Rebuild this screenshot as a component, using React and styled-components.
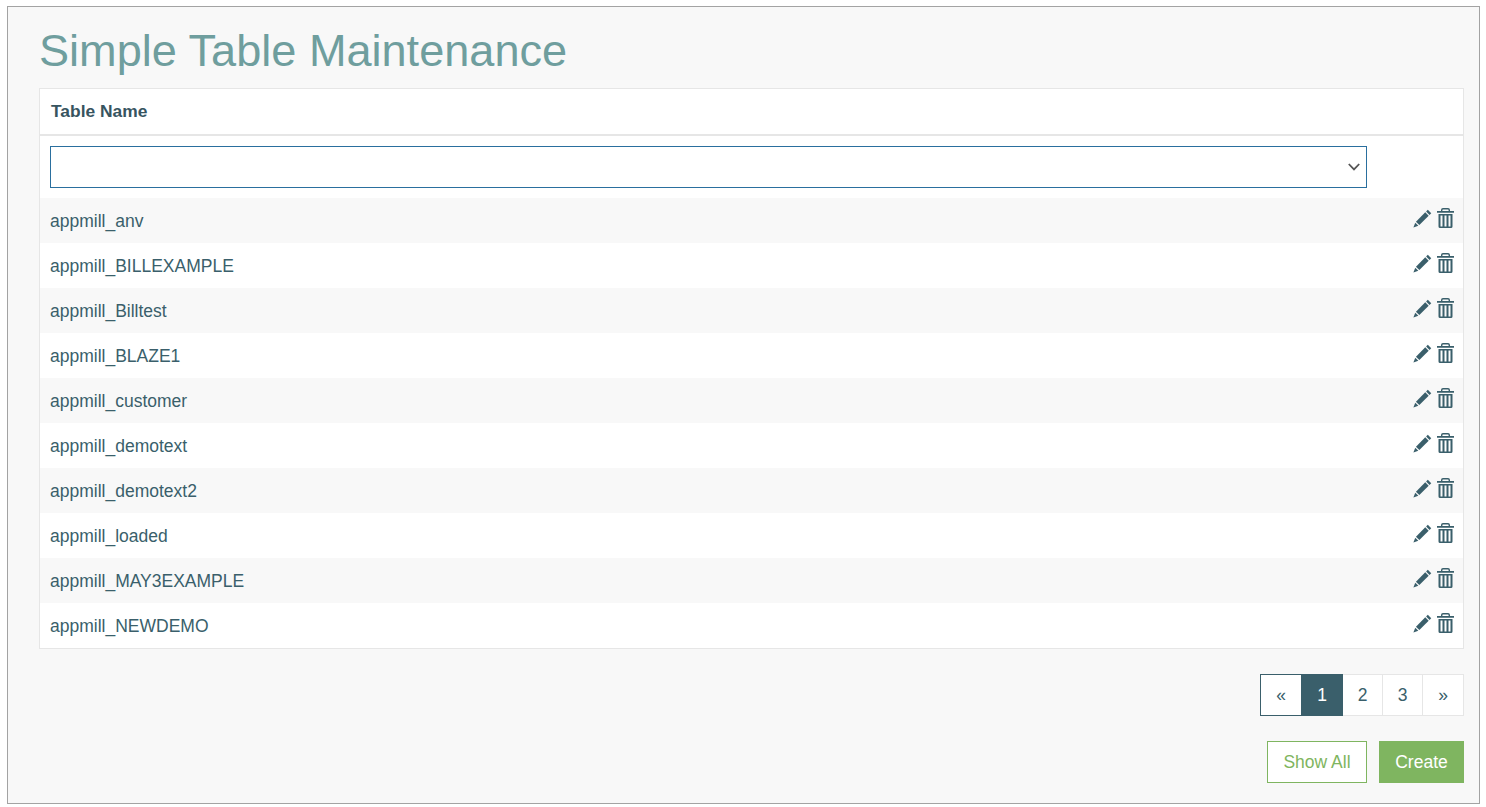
import React from "react";
import styled, { createGlobalStyle } from "styled-components";

const tables = [
  "appmill_anv",
  "appmill_BILLEXAMPLE",
  "appmill_Billtest",
  "appmill_BLAZE1",
  "appmill_customer",
  "appmill_demotext",
  "appmill_demotext2",
  "appmill_loaded",
  "appmill_MAY3EXAMPLE",
  "appmill_NEWDEMO",
];

const GlobalStyle = createGlobalStyle`
  * { box-sizing: border-box; }
  html, body { margin: 0; background: #fff; }
  body { font-family: "Liberation Sans", Arial, sans-serif; color: #3a5f6b; }
`;

const Page = styled.div`
  height: 798px;
  margin: 6px 6px 0 7px;
  padding: 0 15px 20px 31px;
  background: #f8f8f8;
  border: 1px solid #a3a3a3;
`;

const Title = styled.h1`
  margin: 0;
  height: 81px;
  padding-top: 16px;
  font-size: 45.1px;
  line-height: 56px;
  font-weight: 400;
  color: #6f9e9e;
`;

const Table = styled.div`
  background: #fff;
  border: 1px solid #e6e6e6;
`;

const HeaderRow = styled.div`
  height: 47px;
  padding-left: 11px;
  display: flex;
  align-items: center;
  border-bottom: 2px solid #e6e6e6;
  font-size: 17.4px;
  font-weight: 700;
  color: #37545f;
`;

const FilterRow = styled.div`
  height: 62px;
  padding: 10px 96px 10px 10px;
`;

const Select = styled.div`
  height: 42px;
  padding-right: 5px;
  display: flex;
  align-items: center;
  justify-content: flex-end;
  background: #fff;
  border: 1px solid #2a6f9e;
  color: #555;
`;

const Row = styled.div`
  height: 45px;
  padding: 2px 9px 0 10px;
  display: flex;
  align-items: center;
  justify-content: space-between;
  background: ${({ $striped }) => ($striped ? "#f8f8f8" : "#fff")};
  font-size: 17.5px;
`;

const Actions = styled.div`
  display: flex;
  align-items: flex-end;
  gap: 5px;
  color: #3a5f6b;
  margin-bottom: 8px;
`;

const Pager = styled.div`
  margin-top: 25px;
  display: flex;
  justify-content: flex-end;
`;

const PageLink = styled.div`
  width: ${({ $wide }) => ($wide ? "42px" : "41px")};
  height: 42px;
  margin-left: -1px;
  display: flex;
  align-items: center;
  justify-content: center;
  z-index: ${({ $active }) => ($active ? 1 : 0)};
  font-size: 17.5px;
  color: ${({ $active }) => ($active ? "#fff" : "#3a5f6b")};
  background: ${({ $active }) => ($active ? "#3a5f6b" : "#fff")};
  border: 1px solid ${({ $active, $outlined }) => ($active || $outlined ? "#3a5f6b" : "#e6e6e6")};
`;

const Buttons = styled.div`
  margin-top: 25px;
  display: flex;
  justify-content: flex-end;
  gap: 12px;
`;

const Button = styled.div`
  height: 42px;
  width: ${({ $width }) => $width}px;
  display: flex;
  align-items: center;
  justify-content: center;
  font-size: 17.5px;
  color: ${({ $primary }) => ($primary ? "#fff" : "#7fb560")};
  background: ${({ $primary }) => ($primary ? "#7fb560" : "#fff")};
  border: 1px solid #7fb560;
`;

const Chevron = () => (
  <svg width="14" height="14" viewBox="0 0 14 14" fill="none" stroke="currentColor" strokeWidth="1.8">
    <path d="M1.8 4 7 9.4 12.2 4" />
  </svg>
);

const Pencil = () => (
  <svg width="19" height="19" viewBox="0 0 20 20" fill="currentColor">
    <path d="M15.6 .8 19.2 4.4 17.4 6.2 13.8 2.6Z" />
    <path d="M12.9 3.5 16.5 7.1 6.7 16.9 3.1 13.3Z" />
    <path d="M2.4 14.4 5.6 17.6 .4 19.6Z" />
  </svg>
);

const Trash = () => (
  <svg width="17" height="20" viewBox="0 0 17 20" fill="currentColor" fillRule="evenodd">
    <path d="M6 0h5a2 2 0 0 1 2 2v1h4v1.8H0V3h4V2a2 2 0 0 1 2-2Zm0 1.5a.6.6 0 0 0-.6.6V3h6.2v-.9a.6.6 0 0 0-.6-.6Z" />
    <path d="M1.5 6h14v12.5a1.5 1.5 0 0 1-1.5 1.5H3a1.5 1.5 0 0 1-1.5-1.5ZM3.5 7.5h2v11h-2ZM7.5 7.5h2v11h-2ZM11.5 7.5h2v11h-2Z" />
  </svg>
);

export default function App() {
  return (
    <>
      <GlobalStyle />
      <Page>
        <Title>Simple Table Maintenance</Title>
        <Table>
          <HeaderRow>Table Name</HeaderRow>
          <FilterRow>
            <Select>
              <Chevron />
            </Select>
          </FilterRow>
          {tables.map((name, i) => (
            <Row key={name} $striped={i % 2 === 0}>
              {name}
              <Actions>
                <Pencil />
                <Trash />
              </Actions>
            </Row>
          ))}
        </Table>
        <Pager>
          <PageLink $wide $outlined>«</PageLink>
          <PageLink $wide $active>1</PageLink>
          <PageLink>2</PageLink>
          <PageLink>3</PageLink>
          <PageLink $wide>»</PageLink>
        </Pager>
        <Buttons>
          <Button $width={100}>Show All</Button>
          <Button $width={85} $primary>Create</Button>
        </Buttons>
      </Page>
    </>
  );
}
